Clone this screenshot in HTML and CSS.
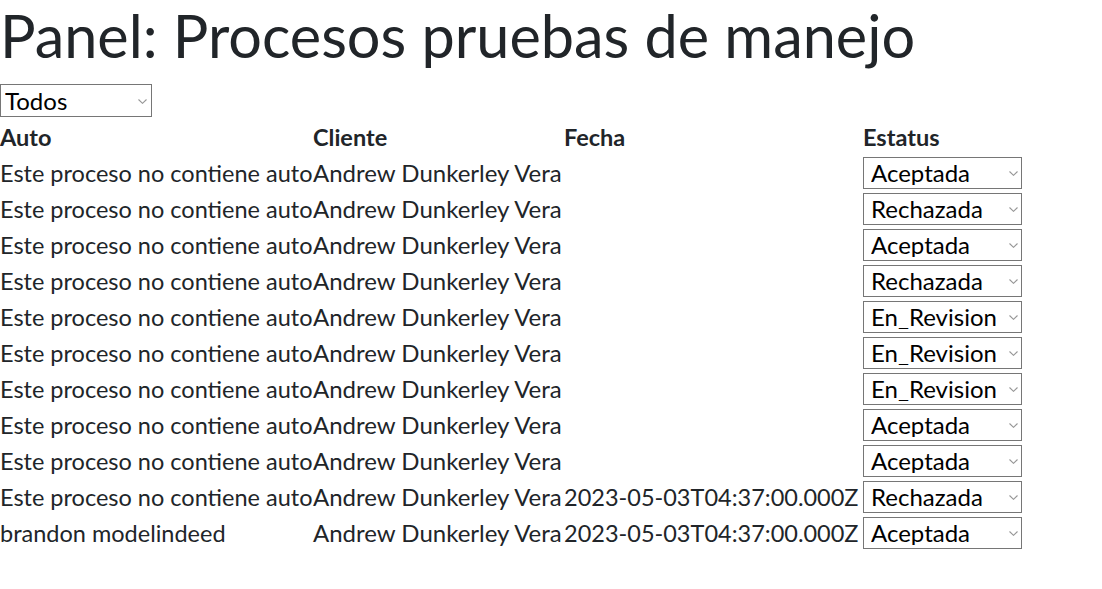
FILE: index.html
```html
<!DOCTYPE html>
<html lang="es">
<head>
<meta charset="utf-8">
<title>Panel</title>
<link rel="stylesheet" href="styles.css">
</head>
<body>
<h1 class="title">Panel: Procesos pruebas de manejo</h1>
<select class="filter">
  <option>Todos</option>
  <option>Aceptada</option>
  <option>Rechazada</option>
</select>
<table class="grid">
  <thead>
    <tr><th class="col-auto">Auto</th><th class="col-client">Cliente</th><th class="col-date">Fecha</th><th class="col-status">Estatus</th></tr>
  </thead>
  <tbody>
    <tr><td>Este proceso no contiene auto</td><td class="client">Andrew Dunkerley Vera</td><td></td><td><select class="status"><option>Aceptada</option><option>Rechazada</option><option>En_Revision</option></select></td></tr>
    <tr><td>Este proceso no contiene auto</td><td class="client">Andrew Dunkerley Vera</td><td></td><td><select class="status"><option>Rechazada</option><option>Aceptada</option><option>En_Revision</option></select></td></tr>
    <tr><td>Este proceso no contiene auto</td><td class="client">Andrew Dunkerley Vera</td><td></td><td><select class="status"><option>Aceptada</option><option>Rechazada</option><option>En_Revision</option></select></td></tr>
    <tr><td>Este proceso no contiene auto</td><td class="client">Andrew Dunkerley Vera</td><td></td><td><select class="status"><option>Rechazada</option><option>Aceptada</option><option>En_Revision</option></select></td></tr>
    <tr><td>Este proceso no contiene auto</td><td class="client">Andrew Dunkerley Vera</td><td></td><td><select class="status"><option>En_Revision</option><option>Aceptada</option><option>Rechazada</option></select></td></tr>
    <tr><td>Este proceso no contiene auto</td><td class="client">Andrew Dunkerley Vera</td><td></td><td><select class="status"><option>En_Revision</option><option>Aceptada</option><option>Rechazada</option></select></td></tr>
    <tr><td>Este proceso no contiene auto</td><td class="client">Andrew Dunkerley Vera</td><td></td><td><select class="status"><option>En_Revision</option><option>Aceptada</option><option>Rechazada</option></select></td></tr>
    <tr><td>Este proceso no contiene auto</td><td class="client">Andrew Dunkerley Vera</td><td></td><td><select class="status"><option>Aceptada</option><option>Rechazada</option><option>En_Revision</option></select></td></tr>
    <tr><td>Este proceso no contiene auto</td><td class="client">Andrew Dunkerley Vera</td><td></td><td><select class="status"><option>Aceptada</option><option>Rechazada</option><option>En_Revision</option></select></td></tr>
    <tr><td>Este proceso no contiene auto</td><td class="client">Andrew Dunkerley Vera</td><td>2023-05-03T04:37:00.000Z</td><td><select class="status"><option>Rechazada</option><option>Aceptada</option><option>En_Revision</option></select></td></tr>
    <tr><td>brandon modelindeed</td><td class="client">Andrew Dunkerley Vera</td><td>2023-05-03T04:37:00.000Z</td><td><select class="status"><option>Aceptada</option><option>Rechazada</option><option>En_Revision</option></select></td></tr>
  </tbody>
</table>
</body>
</html>
```

FILE: styles.css
```css
html, body {
  margin: 0;
  padding: 0;
  background: #fff;
}
body {
  font-family: Lato, "Noto Sans", sans-serif;
  font-size: 23.5px;
  color: #212529;
  line-height: 36px;
}
.title {
  font-weight: 400;
  font-size: 59.4px;
  line-height: 1.2;
  margin: 0 0 13px 0;
}
.filter,
.status {
  -webkit-appearance: none;
  appearance: none;
  font-family: Lato, "Noto Sans", sans-serif;
  font-size: 24px;
  line-height: 1;
  color: #000;
  background-color: #fff;
  background-image: url("data:image/svg+xml;utf8,<svg xmlns='http://www.w3.org/2000/svg' width='9' height='5' viewBox='0 0 9 5'><path d='M0.5 0.5 L4.5 4.3 L8.5 0.5' fill='none' stroke='%23969696' stroke-width='1.1'/></svg>");
  background-repeat: no-repeat;
  border: 1px solid #767676;
  border-radius: 0;
  margin: 0;
  box-sizing: border-box;
}
.filter {
  display: block;
  width: 152px;
  height: 33px;
  padding: 0 20px 0 4px;
  margin-bottom: 2px;
  background-position: 137px 14px;
}
.grid {
  border-collapse: collapse;
  border-spacing: 0;
  table-layout: fixed;
}
.col-auto { width: 313px; }
.col-client { width: 251px; }
.col-date { width: 299px; }
.col-status { width: 160px; }
.grid th {
  font-weight: 700;
  text-align: left;
  padding: 0;
  height: 36px;
}
.grid td {
  padding: 0;
  height: 36px;
  white-space: nowrap;
}
.grid td.client {
  font-size: 24px;
}
.status {
  display: block;
  width: 159px;
  height: 32px;
  margin: 2px 0;
  padding: 0 20px 0 7px;
  background-position: 145px 13px;
}
```
